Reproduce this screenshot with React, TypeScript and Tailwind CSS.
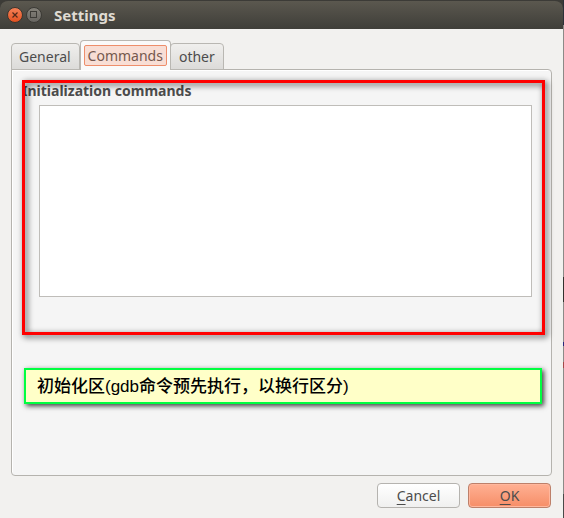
import { useState } from "react";

const TABS = ["General", "Commands", "other"] as const;

type Tab = (typeof TABS)[number];

function TitleBar() {
  return (
    <header className="flex h-[29px] items-center rounded-t-lg border-t border-[#3c3b37] bg-linear-to-b from-[#5b584f] to-[#3f3e39] pl-[7px]">
      <button type="button" aria-label="Close" className="mr-[3px] h-4 w-4">
        <svg viewBox="0 0 16 16" className="h-4 w-4">
          <defs>
            <linearGradient id="close-fill" x1="0" y1="0" x2="0" y2="1">
              <stop offset="0" stopColor="#f68359" />
              <stop offset="1" stopColor="#e2501f" />
            </linearGradient>
          </defs>
          <circle cx="8" cy="8" r="7.5" fill="url(#close-fill)" stroke="#38352f" />
          <path d="M5.5 5.5l5 5M10.5 5.5l-5 5" stroke="#51291b" strokeWidth="1.2" />
        </svg>
      </button>
      <button type="button" aria-label="Maximize" className="h-4 w-4">
        <svg viewBox="0 0 16 16" className="h-4 w-4">
          <defs>
            <linearGradient id="max-fill" x1="0" y1="0" x2="0" y2="1">
              <stop offset="0" stopColor="#85827a" />
              <stop offset="1" stopColor="#676560" />
            </linearGradient>
          </defs>
          <circle cx="8" cy="8" r="7.5" fill="url(#max-fill)" stroke="#3a3934" />
          <rect x="4.5" y="4.5" width="6" height="6" fill="none" stroke="#3c3b36" />
        </svg>
      </button>
      <h1 className="ml-3 text-[15px] font-bold text-[#dfdbd2]">Settings</h1>
    </header>
  );
}

export default function App() {
  const [activeTab, setActiveTab] = useState<Tab>("Commands");
  const [commands, setCommands] = useState("");

  return (
    <div className="flex min-h-screen bg-[#3c3b37] font-['Noto_Sans','Open_Sans',sans-serif] text-[#4c4c4c]">
      <div className="flex min-w-0 flex-1 flex-col">
        <TitleBar />

        <main className="flex flex-1 flex-col bg-[#f2f1ef] px-[11px] pt-[11px] pb-2.5">
          <div role="tablist" className="relative z-10 -mb-px flex items-end">
            {TABS.map((tab) => {
              const isActive = tab === activeTab;
              return (
                <button
                  key={tab}
                  id={`tab-${tab}`}
                  type="button"
                  role="tab"
                  aria-selected={isActive}
                  aria-controls="tab-panel"
                  onClick={() => setActiveTab(tab)}
                  className={`rounded-t-[4px] border border-[#b9b7b2] text-sm whitespace-nowrap ${
                    isActive
                      ? "-mr-px h-[30px] border-b-0 bg-[#fafafa] px-[3px]"
                      : "h-[27px] bg-linear-to-b from-[#f0efed] to-[#dcdbd9] px-2 first:px-[7px] first:pr-2"
                  }`}
                >
                  {isActive ? (
                    <span className="block h-[21px] rounded-[2px] border border-[#ee8e6b] bg-[#f8ded5] px-[3px] leading-[19px] text-[#75584e]">
                      {tab}
                    </span>
                  ) : (
                    tab
                  )}
                </button>
              );
            })}
          </div>

          <div
            id="tab-panel"
            role="tabpanel"
            aria-labelledby={`tab-${activeTab}`}
            className="flex-1 rounded-[4px] rounded-tl-none border border-[#b5b3ae] bg-[#f5f5f5] pt-2.5 pr-1.5 pb-4 pl-2.5 shadow-[inset_1px_1px_0_#fff]"
          >
            <section className="relative h-[255px] pr-[13px] pl-[17px]">
              <label
                htmlFor="init-commands"
                className="-ml-[17px] block h-[25px] text-sm leading-[22px] font-bold"
              >
                Initialization commands
              </label>
              <textarea
                id="init-commands"
                value={commands}
                onChange={(event) => setCommands(event.target.value)}
                className="block h-48 w-full resize-none border border-[#bfbdb9] bg-white p-1 text-sm outline-none"
              />
              <div className="pointer-events-none absolute inset-0 border-3 border-[#ff0000] drop-shadow-[2px_2px_3px_rgba(0,0,0,0.75)]" />
            </section>

            <p className="mt-[33px] mr-[3px] ml-0.5 flex h-9 items-center border-2 border-[#00ff40] bg-[#ffffc8] pt-0.5 pl-[11px] font-['Liberation_Sans','Noto_Sans_CJK_SC',sans-serif] text-[17px] font-medium text-black shadow-[2px_2px_5px_rgba(0,0,0,0.75)]">
              初始化区(gdb命令预先执行，以换行区分)
            </p>
          </div>

          <footer className="mt-[7px] flex justify-end gap-2 pr-px">
            <button
              type="button"
              className="h-[25px] w-[83px] rounded-[4px] border border-[#b5b3af] bg-linear-to-b from-white to-[#f0f0ef] text-sm leading-[23px]"
            >
              <span className="underline underline-offset-3">C</span>ancel
            </button>
            <button
              type="button"
              className="h-[25px] w-[83px] rounded-[4px] border border-[#bd806a] bg-linear-to-b from-[#ffb093] to-[#f68e67] text-sm leading-[23px] shadow-[inset_0_0_0_1px_#ffb79d]"
            >
              <span className="underline underline-offset-3">O</span>K
            </button>
          </footer>
        </main>
      </div>

      {/* sliver of the desktop behind the window */}
      <div className="flex w-px flex-col bg-[#8c8a87]">
        <div className="h-[25px] bg-[#2c3038]" />
        <div className="mt-[252px] h-[25px] bg-[#33312e]" />
        <div className="mt-10 h-1 bg-[#27277c]" />
        <div className="mt-4 h-1.5 bg-[#a34848]" />
        <div className="mt-auto h-6 bg-[#4a4948]" />
      </div>
    </div>
  );
}
